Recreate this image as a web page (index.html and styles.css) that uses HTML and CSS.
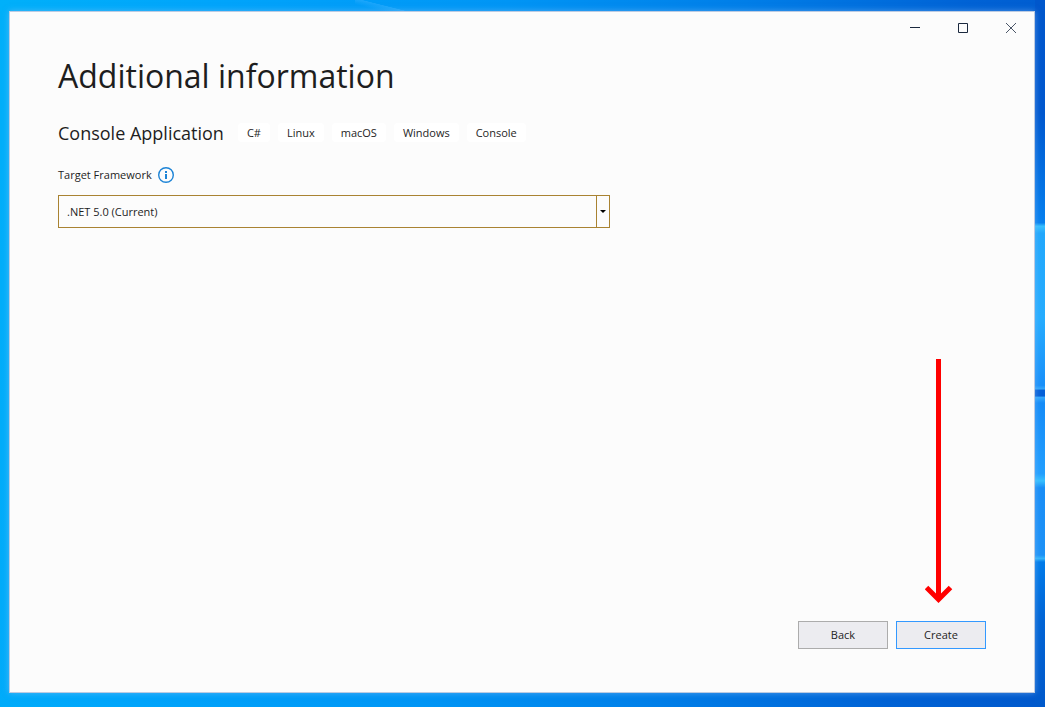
FILE: index.html
```html
<!DOCTYPE html>
<html lang="en">
<head>
<meta charset="utf-8">
<title>Additional information</title>
<link rel="stylesheet" href="styles.css">
</head>
<body class="desktop">
<div class="wallpaper-beam"></div>
<div class="wallpaper-pane"></div>
<section class="window">
  <header class="titlebar">
    <button class="caption" type="button" aria-label="Minimize"><svg width="12" height="12" viewBox="0 0 12 12"><path d="M2 5.5h10"/></svg></button>
    <button class="caption" type="button" aria-label="Maximize"><svg width="12" height="12" viewBox="0 0 12 12"><path d="M2.500 1.500h9v9h-9z"/></svg></button>
    <button class="caption caption-close" type="button" aria-label="Close"><svg width="12" height="12" viewBox="0 0 12 12"><path d="M2 1l10 10M12 1L2 11"/></svg></button>
  </header>
  <main class="content">
    <h1 class="title">Additional information</h1>
    <div class="template">
      <h2 class="template-name">Console Application</h2>
      <ul class="tags">
        <li class="tag">C#</li>
        <li class="tag">Linux</li>
        <li class="tag">macOS</li>
        <li class="tag">Windows</li>
        <li class="tag">Console</li>
      </ul>
    </div>
    <div class="label-row">
      <label for="framework">Target Framework</label>
      <svg class="info" width="16" height="16" viewBox="0 0 16 16"><circle cx="8" cy="8" r="7.300"/><path d="M7 4h2v2H7zM7 7h2v5H7z"/></svg>
    </div>
    <div class="combo">
      <select class="combo-select" id="framework"><option>.NET 5.0 (Current)</option></select>
      <span class="combo-toggle"><svg width="6" height="3" viewBox="0 0 6 3"><path d="M0 0h6L3 3z"/></svg></span>
    </div>
  </main>
  <footer class="actions">
    <button class="action" type="button">Back</button>
    <button class="action action-primary" type="button">Create</button>
    <svg class="pointer" width="28" height="245" viewBox="0 0 28 245"><path d="M13.500 0v240M1.500 228.500l12 12L25.500 228.500"/></svg>
  </footer>
</section>
</body>
</html>
```
FILE: styles.css
```css
* { box-sizing: border-box; }

.desktop {
  position: relative;
  display: flex;
  min-height: 100vh;
  margin: 0;
  padding: 11px 10px 14px 9px;
  overflow: hidden;
  background: linear-gradient(97deg, #00b0fa 0%, #00a4fb 20%, #0095f5 45%, #007ee8 66%, #0062d5 86%, #0058cc 100%);
  color: #1e1e1e;
  font: 12px/16px "Open Sans", "Noto Sans", sans-serif;
}

.wallpaper-beam {
  position: absolute;
  top: 0;
  left: 34%;
  width: 60px;
  height: 11px;
  background: linear-gradient(194deg, transparent 50%, #1ba6fb 52%, transparent 75%);
}

.wallpaper-pane {
  position: absolute;
  top: 0;
  right: 0;
  bottom: 0;
  width: 10px;
  background: linear-gradient(#0057cc 0%, #0058cf 16%, #0680ef 31.500%, #38c0ff 32%, #22a8fd 33%, #26adff 45%, #1990fa 54.500%, #34a8fb 55%, #0560d8 55.200%, #0560d8 56%, #34a8fb 56.200%, #158cf8 57%, #229fff 67%, #36c0ff 68%, #198ef7 69%, #1d92f7 78.500%, #34b5fb 79%, #007bea 79.500%, #0064d5 88%, #0059cb 100%);
}

.window {
  position: relative;
  flex: 1;
  display: flex;
  flex-direction: column;
  border: 1px solid #bccbe2;
  background: #fcfcfc;
  box-shadow: 0 0 6px rgba(150, 195, 245, 0.5);
}

.titlebar {
  display: flex;
  justify-content: flex-end;
}

.caption {
  display: grid;
  place-items: center;
  width: 48px;
  height: 32px;
  padding: 0;
  border: 0;
  background: none;
}

.caption svg { fill: none; stroke: #1b293e; stroke-width: 1; }
.caption-close svg { stroke: #4b5668; }

.content {
  flex: 1;
  padding: 8px 48px 0;
}

.title {
  margin: 0;
  font: 400 32px/48px "Open Sans", sans-serif;
}

.template {
  display: flex;
  align-items: flex-start;
  gap: 14px;
  margin-top: 20px;
}

.template-name {
  margin: 0;
  font: 400 18px/26px "Open Sans", sans-serif;
}

.tags {
  display: flex;
  gap: 8px;
  margin: 3px 0 0;
  padding: 0;
  list-style: none;
}

.tag {
  padding: 0 9px;
  border-radius: 4px;
  background: #fff;
  font-size: 11px;
  line-height: 19px;
}

.label-row {
  display: flex;
  align-items: center;
  gap: 6px;
  margin-top: 21px;
  font-size: 11px;
}

.info { fill: #1d84d6; }
.info circle { fill: none; stroke: #1d84d6; stroke-width: 1.400; }

.combo {
  display: flex;
  width: 552px;
  max-width: 100%;
  height: 33px;
  margin-top: 12px;
  border: 1px solid #a98332;
}

.combo-select {
  flex: 1;
  padding: 0 8px;
  border: 0;
  appearance: none;
  outline: 0;
  background: #fcfcfc;
  color: #1e1e1e;
  font: 11px/16px "Open Sans", sans-serif;
}

.combo-toggle {
  display: grid;
  place-items: center;
  width: 13px;
  border-left: 1px solid #a98332;
}

.actions {
  position: relative;
  display: flex;
  justify-content: flex-end;
  gap: 8px;
  padding: 0 48px 43px;
}

.action {
  width: 90px;
  height: 28px;
  padding: 0;
  border: 1px solid #acacac;
  background: #ececf0;
  color: #1e1e1e;
  font: 11px/16px "Open Sans", sans-serif;
}

.action-primary { border-color: #3399ff; }

.pointer {
  position: absolute;
  right: 81px;
  bottom: 88px;
  fill: none;
  stroke: #f00;
  stroke-width: 5;
}
```
